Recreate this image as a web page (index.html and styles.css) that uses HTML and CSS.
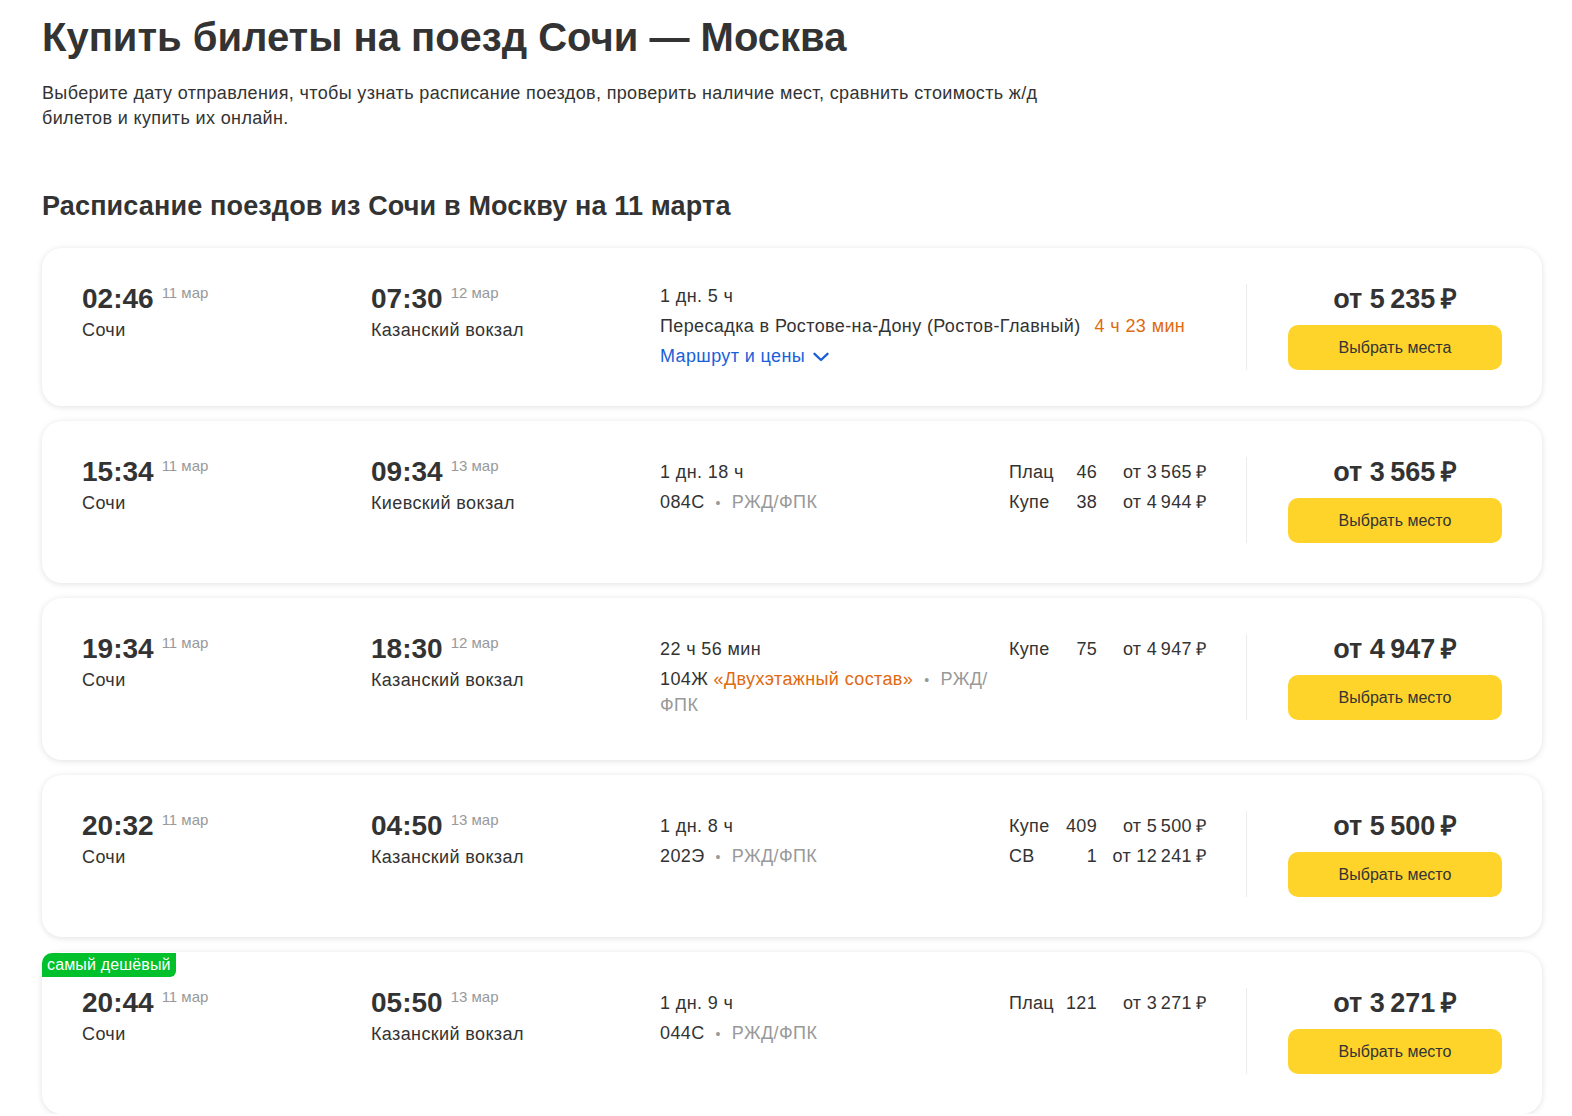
FILE: index.html
```html
<!DOCTYPE html>
<html lang="ru">
<head>
<meta charset="utf-8">
<title>Купить билеты на поезд Сочи — Москва</title>
<link rel="stylesheet" href="styles.css">
</head>
<body>
<main class="page">
  <h1 class="title">Купить билеты на поезд Сочи — Москва</h1>
  <p class="lead">Выберите дату отправления, чтобы узнать расписание поездов, проверить наличие мест, сравнить стоимость ж/д билетов и купить их онлайн.</p>
  <h2 class="subtitle">Расписание поездов из Сочи в Москву на 11 марта</h2>

  <div class="list">
    <div class="card card--transfer">
      <div class="point">
        <div class="time-row"><span class="time">02:46</span><span class="date">11 мар</span></div>
        <div class="station">Сочи</div>
      </div>
      <div class="point">
        <div class="time-row"><span class="time">07:30</span><span class="date">12 мар</span></div>
        <div class="station">Казанский вокзал</div>
      </div>
      <div class="info">
        <div class="line">1 дн. 5 ч</div>
        <div class="line">Пересадка в Ростове-на-Дону (Ростов-Главный)<span class="accent accent--gap">4 ч 23 мин</span></div>
        <div class="line"><span class="link">Маршрут и цены<svg class="chev" viewBox="0 0 16 10" width="16" height="10"><path d="M1.5 1.8 L8 8 L14.5 1.8" fill="none" stroke="currentColor" stroke-width="2.3" stroke-linecap="round" stroke-linejoin="round"/></svg></span></div>
      </div>
      <div class="divider"></div>
      <div class="price-col">
        <div class="price">от 5&thinsp;235&thinsp;₽</div>
        <button class="btn">Выбрать места</button>
      </div>
    </div>

    <div class="card">
      <div class="point">
        <div class="time-row"><span class="time">15:34</span><span class="date">11 мар</span></div>
        <div class="station">Сочи</div>
      </div>
      <div class="point">
        <div class="time-row"><span class="time">09:34</span><span class="date">13 мар</span></div>
        <div class="station">Киевский вокзал</div>
      </div>
      <div class="info">
        <div class="line">1 дн. 18 ч</div>
        <div class="line">084С<span class="dot">•</span><span class="muted">РЖД/ФПК</span></div>
      </div>
      <div class="seats">
        <span class="s-class">Плац</span><span class="s-count">46</span><span class="s-price">от 3&thinsp;565&thinsp;₽</span>
        <span class="s-class">Купе</span><span class="s-count">38</span><span class="s-price">от 4&thinsp;944&thinsp;₽</span>
      </div>
      <div class="divider"></div>
      <div class="price-col">
        <div class="price">от 3&thinsp;565&thinsp;₽</div>
        <button class="btn">Выбрать место</button>
      </div>
    </div>

    <div class="card">
      <div class="point">
        <div class="time-row"><span class="time">19:34</span><span class="date">11 мар</span></div>
        <div class="station">Сочи</div>
      </div>
      <div class="point">
        <div class="time-row"><span class="time">18:30</span><span class="date">12 мар</span></div>
        <div class="station">Казанский вокзал</div>
      </div>
      <div class="info">
        <div class="line">22 ч 56 мин</div>
        <div class="line">104Ж <span class="accent">«Двухэтажный состав»</span><span class="dot">•</span><span class="muted">РЖД/<wbr>ФПК</span></div>
      </div>
      <div class="seats">
        <span class="s-class">Купе</span><span class="s-count">75</span><span class="s-price">от 4&thinsp;947&thinsp;₽</span>
      </div>
      <div class="divider"></div>
      <div class="price-col">
        <div class="price">от 4&thinsp;947&thinsp;₽</div>
        <button class="btn">Выбрать место</button>
      </div>
    </div>

    <div class="card">
      <div class="point">
        <div class="time-row"><span class="time">20:32</span><span class="date">11 мар</span></div>
        <div class="station">Сочи</div>
      </div>
      <div class="point">
        <div class="time-row"><span class="time">04:50</span><span class="date">13 мар</span></div>
        <div class="station">Казанский вокзал</div>
      </div>
      <div class="info">
        <div class="line">1 дн. 8 ч</div>
        <div class="line">202Э<span class="dot">•</span><span class="muted">РЖД/ФПК</span></div>
      </div>
      <div class="seats">
        <span class="s-class">Купе</span><span class="s-count">409</span><span class="s-price">от 5&thinsp;500&thinsp;₽</span>
        <span class="s-class">СВ</span><span class="s-count">1</span><span class="s-price">от 12&thinsp;241&thinsp;₽</span>
      </div>
      <div class="divider"></div>
      <div class="price-col">
        <div class="price">от 5&thinsp;500&thinsp;₽</div>
        <button class="btn">Выбрать место</button>
      </div>
    </div>

    <div class="card">
      <span class="badge">самый дешёвый</span>
      <div class="point">
        <div class="time-row"><span class="time">20:44</span><span class="date">11 мар</span></div>
        <div class="station">Сочи</div>
      </div>
      <div class="point">
        <div class="time-row"><span class="time">05:50</span><span class="date">13 мар</span></div>
        <div class="station">Казанский вокзал</div>
      </div>
      <div class="info">
        <div class="line">1 дн. 9 ч</div>
        <div class="line">044С<span class="dot">•</span><span class="muted">РЖД/ФПК</span></div>
      </div>
      <div class="seats">
        <span class="s-class">Плац</span><span class="s-count">121</span><span class="s-price">от 3&thinsp;271&thinsp;₽</span>
      </div>
      <div class="divider"></div>
      <div class="price-col">
        <div class="price">от 3&thinsp;271&thinsp;₽</div>
        <button class="btn">Выбрать место</button>
      </div>
    </div>
  </div>
</main>
</body>
</html>
```

FILE: styles.css
```css
* { box-sizing: border-box; }

html, body {
  margin: 0;
  background: #fff;
}

body {
  font-family: "Liberation Sans", Arial, sans-serif;
  color: #333;
}

.page {
  padding: 12px 30px 0 42px;
}

.title {
  margin: 0;
  font-size: 40px;
  line-height: 50px;
  font-weight: 700;
  color: #333;
}

.lead {
  margin: 19px 0 0;
  max-width: 1010px;
  font-size: 18px;
  line-height: 25px;
  letter-spacing: 0.36px;
  color: #333;
}

.subtitle {
  margin: 58px 0 0;
  font-size: 27px;
  line-height: 34px;
  font-weight: 700;
  letter-spacing: 0.15px;
  color: #333;
}

.list {
  margin-top: 25px;
  display: flex;
  flex-direction: column;
  gap: 15px;
}

.card {
  position: relative;
  display: flex;
  align-items: flex-start;
  padding: 36px 40px 40px;
  background: #fff;
  border-radius: 20px;
  box-shadow: 0 1px 6px rgba(0, 0, 0, 0.12);
}

.card--transfer {
  padding-bottom: 36px;
}

.point {
  width: 289px;
  flex: none;
}

.time-row {
  display: flex;
  align-items: flex-start;
  height: 30px;
}

.time {
  font-size: 28px;
  line-height: 30px;
  font-weight: 700;
  color: #333;
}

.date {
  margin-left: 8px;
  font-size: 15px;
  line-height: 18px;
  color: #999;
}

.station {
  margin-top: 1px;
  font-size: 18px;
  line-height: 30px;
  letter-spacing: 0.38px;
  color: #333;
}

.info {
  flex: 1;
  min-width: 0;
  padding-top: 3px;
  font-size: 18px;
  line-height: 25px;
  letter-spacing: 0.38px;
}

.card--transfer .info {
  padding-top: 0;
}

.line + .line {
  margin-top: 5px;
}

.accent {
  color: #e06a10;
}

.accent--gap {
  margin-left: 14px;
}

.muted {
  color: #999;
}

.dot {
  color: #999;
  margin: 0 11px;
  font-size: 14px;
}

.link {
  color: #1a5fd9;
  display: inline-flex;
  align-items: center;
}

.chev {
  margin-left: 8px;
}

.seats {
  width: 197px;
  flex: none;
  margin-left: 12px;
  display: grid;
  grid-template-columns: 57px 31px 1fr;
  font-size: 18px;
  line-height: 30px;
  letter-spacing: 0.3px;
  white-space: nowrap;
}

.s-count, .s-price {
  text-align: right;
}

.divider {
  align-self: stretch;
  width: 1px;
  margin: 0 41px 0 40px;
  background: #ececec;
  flex: none;
}

.price-col {
  width: 214px;
  flex: none;
  text-align: center;
}

.price {
  font-size: 27px;
  line-height: 30px;
  font-weight: 700;
  color: #333;
  white-space: nowrap;
}

.btn {
  display: block;
  width: 100%;
  height: 45px;
  margin-top: 11px;
  border: 0;
  border-radius: 10px;
  background: #fed42b;
  font-family: inherit;
  font-size: 16px;
  color: #333;
  cursor: pointer;
}

.badge {
  position: absolute;
  top: 1px;
  left: 0;
  height: 24px;
  padding: 0 5px;
  background: #00c12b;
  color: #fff;
  font-size: 16px;
  line-height: 24px;
  letter-spacing: 0.15px;
  border-radius: 10px 0 6px 0;
}
```
